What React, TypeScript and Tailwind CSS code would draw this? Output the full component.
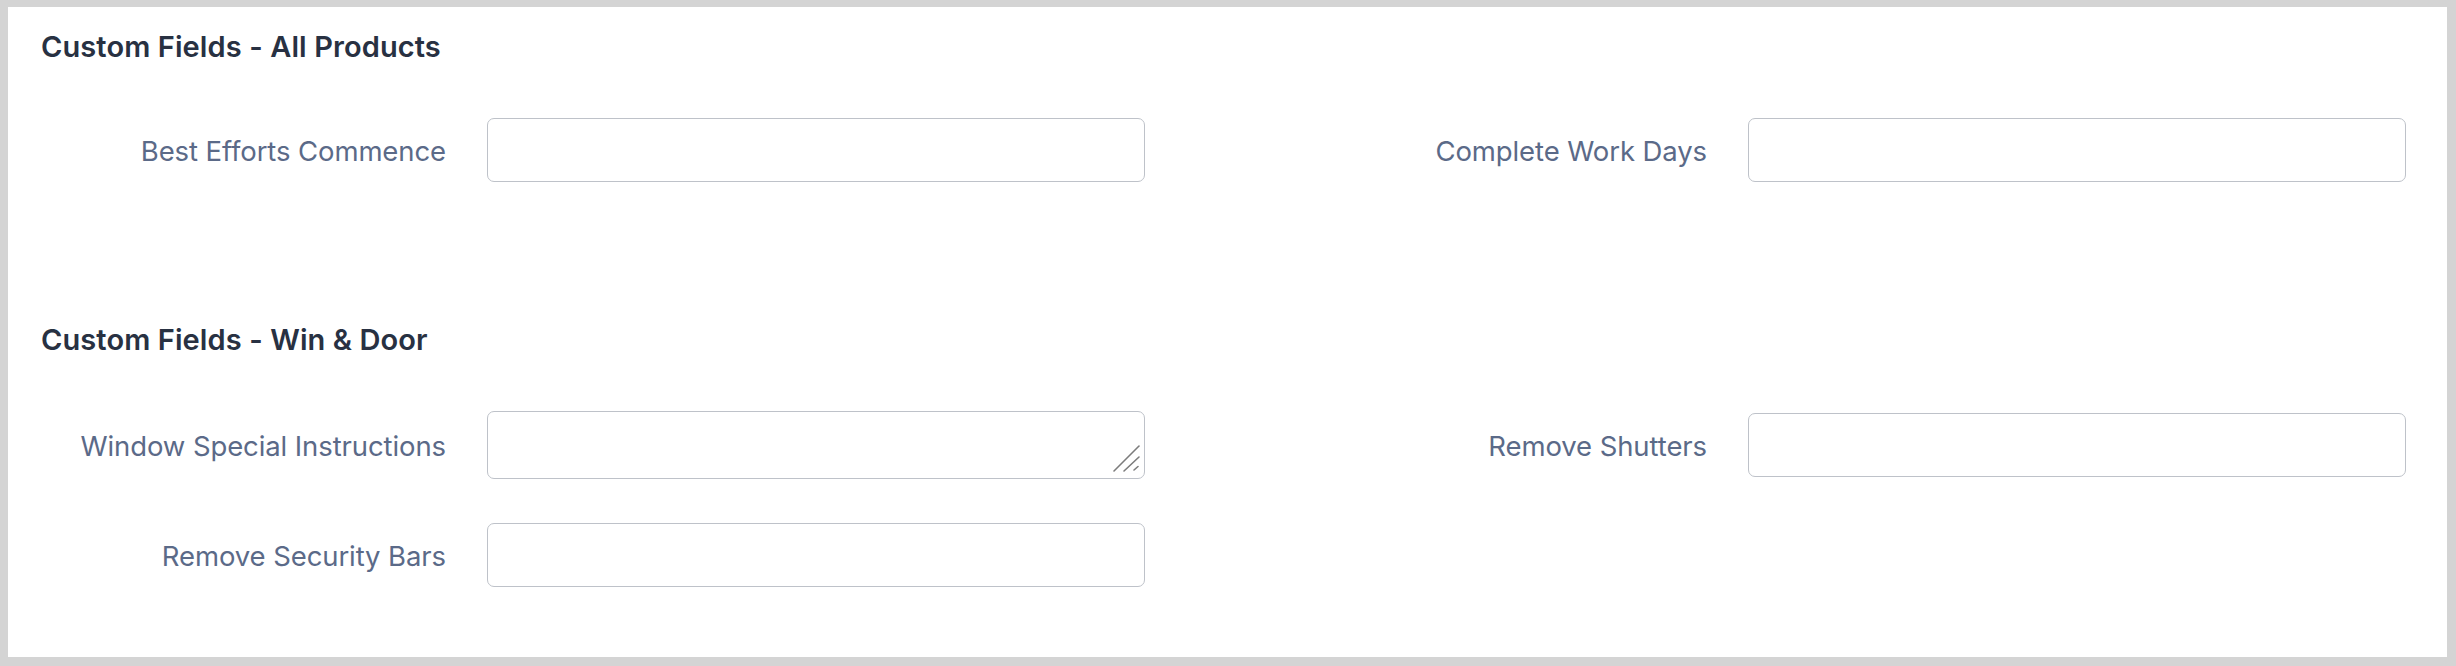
import React from "react";

const font = { fontFamily: "Inter, 'Noto Sans', sans-serif" };

function Field({ label, textarea, labelW }: { label: string; textarea?: boolean; labelW: string }) {
  return (
    <div className="flex items-center">
      <div className={`${labelW} shrink-0 text-right text-[27.5px] tracking-[-0.1px] text-[#5b6a88] leading-none pr-[41px] pt-[4px]`}>{label}</div>
      {textarea ? (
        <div className="relative">
          <textarea className="w-[658px] h-[68px] border-[1.5px] border-[#bec2c9] rounded-[7px] bg-white resize-none outline-none block" />
          <svg className="absolute right-0 bottom-0 pointer-events-none" width="40" height="40" viewBox="0 0 40 40">
            <g stroke="#7c7c7c" strokeWidth="1.6" strokeLinecap="round">
              <line x1="9" y1="32" x2="34" y2="7" />
              <line x1="19" y1="32" x2="34" y2="18" />
              <line x1="29" y1="31" x2="33" y2="27.5" />
            </g>
          </svg>
        </div>
      ) : (
        <input className="w-[658px] h-[64px] border-[1.5px] border-[#bec2c9] rounded-[7px] bg-white outline-none block" />
      )}
    </div>
  );
}

export default function App() {
  return (
    <div className="w-[2456px] h-[666px] bg-[#d4d4d4] pt-[7px] pl-[8px] pr-[9px] pb-[9px]" style={font}>
      <div className="w-full h-full bg-white pt-[20px] pl-[33px]">
        <h2 className="h-[40px] leading-[40px] text-[29px] font-semibold tracking-[0.1px] text-[#283142]">Custom Fields - All Products</h2>
        <div className="flex mt-[51px] -ml-[33px]">
          <Field label="Best Efforts Commence" labelW="w-[479px]" />
          <Field label="Complete Work Days" labelW="w-[603px]" />
        </div>
        <h2 className="mt-[138px] h-[40px] leading-[40px] text-[29px] font-semibold tracking-[0.1px] text-[#283142]">Custom Fields - Win &amp; Door</h2>
        <div className="flex mt-[51px] -ml-[33px] items-start">
          <Field label="Window Special Instructions" labelW="w-[479px]" textarea />
          <div className="mt-[2px]">
            <Field label="Remove Shutters" labelW="w-[603px]" />
          </div>
        </div>
        <div className="flex mt-[44px] -ml-[33px]">
          <Field label="Remove Security Bars" labelW="w-[479px]" />
        </div>
      </div>
    </div>
  );
}
